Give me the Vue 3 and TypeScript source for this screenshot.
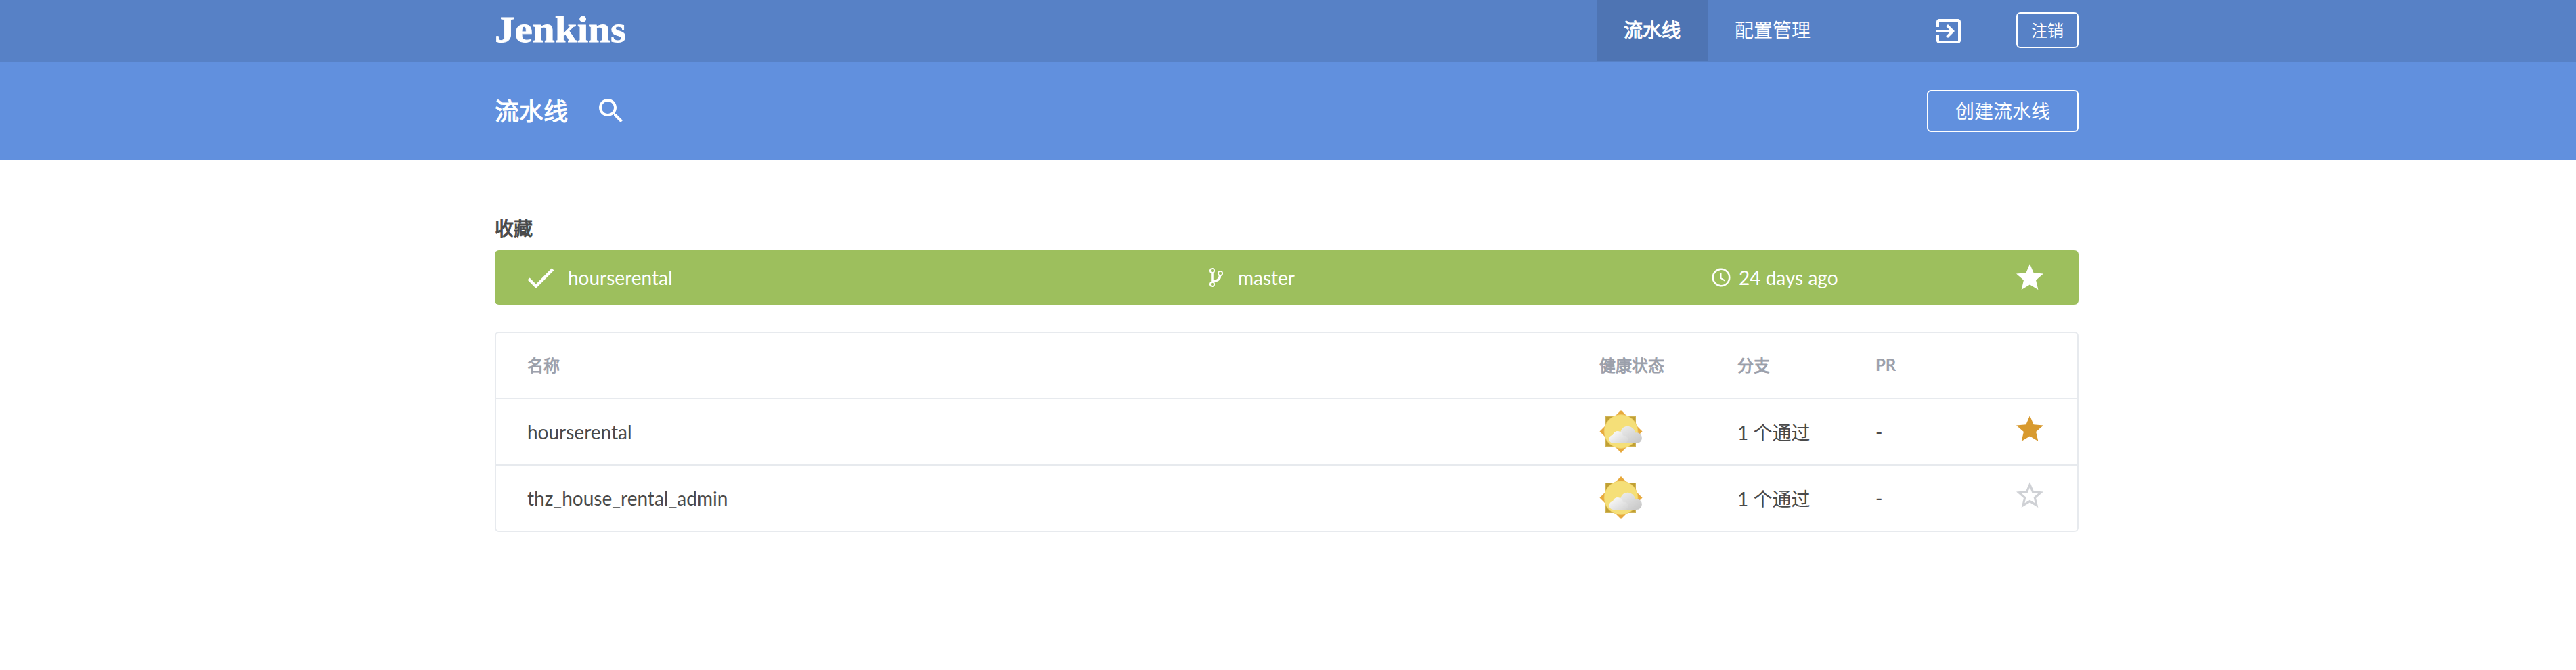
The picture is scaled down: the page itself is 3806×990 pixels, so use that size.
<script setup lang="ts">
interface Pipeline {
  name: string
  branches: string
  pr: string
  favorite: boolean
}

const navItems = [
  { label: '流水线', active: true },
  { label: '配置管理', active: false },
]

const pipelines: Pipeline[] = [
  { name: 'hourserental', branches: '1 个通过', pr: '-', favorite: true },
  { name: 'thz_house_rental_admin', branches: '1 个通过', pr: '-', favorite: false },
]

const starFull =
  'M12 17.27L18.18 21l-1.64-7.03L22 9.24l-7.19-.61L12 2 9.19 8.63 2 9.24l5.46 4.73L5.82 21z'
const starOutline =
  'M22 9.24l-7.19-.62L12 2 9.19 8.63 2 9.24l5.46 4.73L5.82 21 12 17.27 18.18 21l-1.63-7.03L22 9.24zM12 15.4l-3.76 2.27 1-4.28-3.32-2.88 4.38-.38L12 6.1l1.71 4.04 4.38.38-3.32 2.88 1 4.28L12 15.4z'
</script>

<template>
  <div class="page">
    <header class="topbar">
      <div class="container topbar-inner">
        <svg class="logo" width="200" height="90" viewBox="0 0 200 90">
          <text x="0" y="61.500" textLength="194" lengthAdjust="spacingAndGlyphs">Jenkins</text>
        </svg>
        <nav class="nav">
          <a v-for="item in navItems" :key="item.label" class="nav-item" :class="{ active: item.active }">{{ item.label }}</a>
        </nav>
        <svg class="icon exit" viewBox="0 0 24 24">
          <path d="M10.09 15.59L11.5 17l5-5-5-5-1.41 1.41L12.67 11H3v2h9.67l-2.58 2.59zM19 3H5c-1.11 0-2 .9-2 2v4h2V5h14v14H5v-4H3v4c0 1.1.89 2 2 2h14c1.1 0 2-.9 2-2V5c0-1.1-.9-2-2-2z" />
        </svg>
        <button class="btn logout">注销</button>
      </div>
    </header>

    <section class="subbar">
      <div class="container subbar-inner">
        <h1 class="title">流水线</h1>
        <svg class="icon search" viewBox="0 0 24 24">
          <path d="M15.5 14h-.79l-.28-.27C15.41 12.59 16 11.11 16 9.5 16 5.91 13.09 3 9.5 3S3 5.91 3 9.5 5.91 16 9.5 16c1.61 0 3.09-.59 4.23-1.57l.27.28v.79l5 4.99L20.49 19l-4.99-5zm-6 0C7.01 14 5 11.99 5 9.5S7.01 5 9.5 5 14 7.01 14 9.5 11.99 14 9.5 14z" />
        </svg>
        <button class="btn create">创建流水线</button>
      </div>
    </section>

    <main class="container main">
      <h2 class="heading">收藏</h2>
      <div class="favorite">
        <div class="fav-name">
          <svg class="check" viewBox="0 0 24 24"><path d="M9 16.17L4.83 12l-1.42 1.41L9 19 21 7l-1.41-1.41z" /></svg>
          <span>hourserental</span>
        </div>
        <div class="fav-branch">
          <svg class="branch" viewBox="0 0 20 28">
            <path class="trunk" d="M4 7v14" />
            <path class="trunk" d="M15.500 11c0 6-3.600 7.300-6.500 8-2.500.5-4 1-4.800 2" />
            <circle cx="4" cy="4" r="3.100" />
            <circle cx="4" cy="24" r="3.100" />
            <circle cx="16" cy="8" r="3.100" />
          </svg>
          <span>master</span>
        </div>
        <div class="fav-time">
          <svg class="clock" viewBox="0 0 28 28">
            <circle cx="14" cy="14" r="12.200" />
            <path d="M13.500 7v8l6 3.600" />
          </svg>
          <span>24 days ago</span>
        </div>
        <svg class="icon star" viewBox="0 0 24 24"><path :d="starFull" /></svg>
      </div>

      <div class="table">
        <div class="row head">
          <span>名称</span>
          <span>健康状态</span>
          <span>分支</span>
          <span class="latin">PR</span>
          <span></span>
        </div>
        <div v-for="p in pipelines" :key="p.name" class="row">
          <span class="cell">{{ p.name }}</span>
          <svg class="weather" viewBox="0 0 64 64">
            <defs>
              <linearGradient id="cloud-back" x1="0" y1="0" x2="1" y2="1">
                <stop offset="0.15" stop-color="#ececec" />
                <stop offset="1" stop-color="#c4c4c4" />
              </linearGradient>
              <linearGradient id="cloud-front" x1="0" y1="0" x2="1" y2="1">
                <stop offset="0.1" stop-color="#fafafa" />
                <stop offset="1" stop-color="#d2d2d2" />
              </linearGradient>
            </defs>
            <rect x="9.500" y="9.500" width="44" height="44" fill="#c0a034" stroke="#d0b355" />
            <path d="M32 0l31.500 31.500L32 63 .5 31.500z" fill="#e7a93d" />
            <circle cx="32" cy="31.500" r="24.900" fill="#f5df78" stroke="#efcb62" stroke-width=".8" />
            <path d="M22 49h33a7.800 7.800 0 0 0 0-15.800c-.8 0-1.500 0-2.200.3a11 11 0 0 0-21.600-1.500L22 40z" fill="url(#cloud-back)" />
            <path d="M20 49h16.700a5.600 5.600 0 0 0 0-11.200h-1.800a7.700 7.700 0 0 0-15.100-1.100A6.200 6.200 0 0 0 20 49z" fill="url(#cloud-front)" />
          </svg>
          <span class="cell">{{ p.branches }}</span>
          <span class="cell">{{ p.pr }}</span>
          <svg class="icon row-star" :class="{ on: p.favorite }" viewBox="0 0 24 24">
            <path :d="p.favorite ? starFull : starOutline" />
          </svg>
        </div>
      </div>
    </main>
  </div>
</template>

<style>
body {
  margin: 0;
  background: #fff;
}
</style>

<style scoped>
.page {
  min-height: 990px;
  font-family: Lato, "Noto Sans CJK SC", sans-serif;
  font-size: 28px;
  color: #4a4a4a;
}
.container {
  width: 2340px;
  margin-left: 731px;
}
.icon {
  width: 48px;
  height: 48px;
  fill: currentColor;
  flex: none;
}
.topbar {
  height: 92px;
  background: #5781c6;
  color: #fff;
}
.topbar-inner,
.subbar-inner {
  display: flex;
}
.logo {
  display: block;
}
.logo text {
  font: bold 54px "Liberation Serif", serif;
  fill: #fff;
  stroke: #fff;
  stroke-width: 0.8px;
}
.nav {
  display: flex;
  margin-left: auto;
}
.nav-item {
  height: 90px;
  padding: 0 40px;
  line-height: 88px;
}
.nav-item.active {
  background: #4e74b3;
  -webkit-text-stroke: 1.1px currentColor;
}
.exit {
  margin: 22px 76px 0 140px;
}
.btn {
  box-sizing: border-box;
  padding: 0;
  border: 2px solid #fff;
  border-radius: 6px;
  background: transparent;
  color: #fff;
  font-family: inherit;
}
.logout {
  width: 92px;
  height: 53px;
  margin-top: 18px;
  font-size: 24px;
  line-height: 49px;
}
.subbar {
  height: 144px;
  background: #6190de;
  color: #fff;
}
.title {
  margin: 0;
  width: 148px;
  font-size: 36px;
  font-weight: 400;
  line-height: 144px;
  -webkit-text-stroke: 1.1px currentColor;
}
.search {
  margin-top: 48px;
}
.create {
  width: 224px;
  height: 62px;
  margin: 41px 0 0 auto;
  font-size: 28px;
  line-height: 58px;
}
.main {
  padding-top: 81px;
}
.heading {
  margin: 0 0 13px;
  font-size: 28px;
  font-weight: 400;
  line-height: 40px;
  -webkit-text-stroke: 1.1px currentColor;
}
.favorite {
  display: flex;
  height: 80px;
  border-radius: 6px;
  background: #9dbf5d;
  color: #fff;
}
.favorite > div {
  display: flex;
  align-items: center;
}
.fav-name {
  width: 1056px;
}
.check {
  width: 53px;
  height: 53px;
  margin: 0 14px 0 41px;
  fill: #fff;
}
.fav-branch {
  width: 742px;
}
.branch {
  width: 20px;
  height: 28px;
  margin-right: 22px;
  fill: none;
  stroke: #fff;
  stroke-width: 1.9;
}
.trunk {
  stroke-width: 3.6;
}
.clock {
  width: 28px;
  height: 28px;
  margin-right: 12px;
  fill: none;
  stroke: #fff;
  stroke-width: 2.6;
}
.clock path {
  stroke-width: 2;
}
.star {
  margin: 16px 48px 0 auto;
}
.table {
  box-sizing: border-box;
  height: 296px;
  margin-top: 40px;
  border: 2px solid #e7eaee;
  border-radius: 6px;
}
.row {
  display: grid;
  grid-template-columns: 1584px 204px 204px 204px 48px;
  align-items: center;
  box-sizing: border-box;
  height: 98px;
  padding-left: 46px;
  border-bottom: 2px solid #e7eaee;
}
.row:last-child {
  height: 96px;
  border-bottom: 0;
}
.head {
  padding-bottom: 3px;
  font-size: 24px;
  color: #9ba0ab;
  -webkit-text-stroke: 0.9px currentColor;
}
.latin {
  font-weight: 700;
  -webkit-text-stroke: 0;
}
.cell {
  padding-bottom: 1px;
}
.weather {
  width: 64px;
  height: 64px;
}
.row-star {
  margin-top: -8px;
  color: #cfd1d5;
}
.row-star.on {
  color: #d89a2f;
}
</style>
